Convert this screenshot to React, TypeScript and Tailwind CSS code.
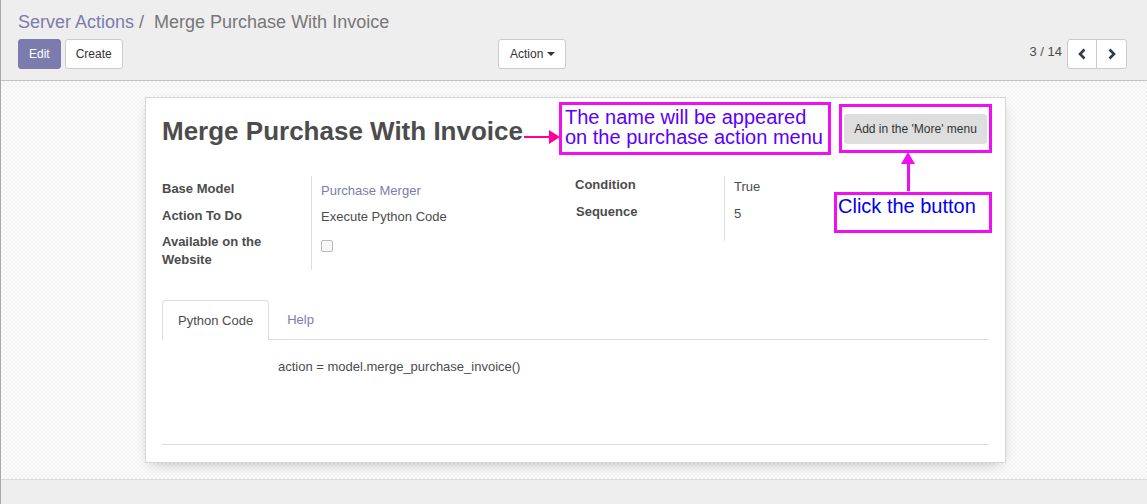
import React from "react";

const Chevron = ({ dir }: { dir: "left" | "right" }) => (
  <svg width="10" height="12" viewBox="0 0 10 12" className="block">
    {dir === "left" ? (
      <path d="M7.5 1.5 L3 6 L7.5 10.5" fill="none" stroke="#2f3a4a" strokeWidth="2.6" strokeLinejoin="miter" />
    ) : (
      <path d="M2.5 1.5 L7 6 L2.5 10.5" fill="none" stroke="#2f3a4a" strokeWidth="2.6" strokeLinejoin="miter" />
    )}
  </svg>
);

export default function App() {
  return (
    <div className="w-[1147px] h-[504px] flex flex-col border-l border-[#a9a9a9] font-['Liberation_Sans',Arial,sans-serif] text-[13px] text-[#4c4c4c] overflow-hidden">
      {/* Control panel */}
      <div className="h-[81px] shrink-0 bg-[#efeeef] border-b border-[#c4c4c4] pl-[17px] pr-[20px]">
        <div className="pt-[11px] h-[39px] text-[18px] leading-[22px]">
          <span className="text-[#7c7bad]">Server Actions</span>
          <span className="text-[#777]"> /&nbsp; Merge Purchase With Invoice</span>
        </div>
        <div className="flex items-start h-[30px]">
          <div className="w-[480px] flex gap-[4px]">
            <button className="h-[30px] px-[10px] rounded-[3px] bg-[#7c7bad] text-white text-[12px] border border-[#7c7bad]">
              Edit
            </button>
            <button className="h-[30px] px-[10px] rounded-[3px] bg-white text-[#333] text-[12px] border border-[#ccc]">
              Create
            </button>
          </div>
          <div className="flex-1">
            <button className="h-[30px] pl-[11px] pr-[10px] rounded-[3px] bg-white text-[#333] text-[12px] border border-[#ccc] flex items-center gap-[4px]">
              Action
              <span className="inline-block w-0 h-0 border-l-[4px] border-r-[4px] border-t-[4px] border-l-transparent border-r-transparent border-t-[#333]" />
            </button>
          </div>
          <div className="flex items-start gap-[5px]">
            <span className="text-[13px] text-[#4c4c4c] leading-[26px]">3 / 14</span>
            <div className="flex h-[30px] border border-[#ccc] rounded-[3px] bg-white">
              <button className="w-[29px] flex items-center justify-center border-r border-[#ccc]">
                <Chevron dir="left" />
              </button>
              <button className="w-[29px] flex items-center justify-center">
                <Chevron dir="right" />
              </button>
            </div>
          </div>
        </div>
      </div>

      {/* Content */}
      <div className="flex-1 bg-[image:repeating-conic-gradient(#f1f1f1_0%_25%,#ffffff_0%_50%)] bg-[length:4px_4px] pt-[16px]">
        <div className="relative ml-[144px] w-[861px] h-[366px] bg-white border border-[#d6d6d6] shadow-[0_5px_14px_-6px_rgba(0,0,0,0.3)] px-[16px]">
          {/* Title row */}
          <div className="flex items-start justify-between">
            <h1 className="pt-[17px] text-[26px] leading-[32px] font-bold text-[#4c4c4c]">
              Merge Purchase With Invoice
            </h1>
            <div className="mt-[6px] mr-[-3px] border-[3px] border-[#f00ff0] w-[153px] h-[49px] px-[2px] pt-[7px]">
              <button className="w-full h-[30px] bg-[#dedede] rounded-[3px] text-[12px] text-[#333]">
                Add in the 'More' menu
              </button>
            </div>
          </div>

          {/* Fields */}
          <div className="flex mt-[23px]">
            <div className="w-[413px] flex">
              <div className="w-[150px] border-r border-[#ddd] font-bold pb-[1px]">
                <div className="h-[27px] pt-[1px] leading-[24px]">Base Model</div>
                <div className="h-[27px] pt-[1px] leading-[24px]">Action To Do</div>
                <div className="leading-[18px] pt-[3px]">
                  Available on the
                  <br />
                  Website
                </div>
              </div>
              <div className="pl-[9px]">
                <div className="h-[27px] pt-[3px] leading-[24px] text-[#7c7bad]">Purchase Merger</div>
                <div className="h-[27px] pt-[2px] leading-[24px]">Execute Python Code</div>
                <div className="pt-[10px]">
                  <span className="block w-[12px] h-[12px] border border-[#bbb] rounded-[2px] bg-[#f7f7f7]" />
                </div>
              </div>
            </div>
            <div className="w-[413px] flex">
              <div className="w-[150px] border-r border-[#ddd] font-bold h-[65px]">
                <div className="h-[27px] pt-[1px] leading-[16px]">Condition</div>
                <div className="h-[27px] pl-[1px] pt-[1px] leading-[16px]">Sequence</div>
              </div>
              <div className="pl-[9px]">
                <div className="h-[27px] pt-[3px] leading-[16px]">True</div>
                <div className="h-[27px] pt-[3px] leading-[16px]">5</div>
              </div>
            </div>
          </div>

          {/* Tabs */}
          <div className="mt-[30px] flex items-end border-b border-[#ddd] h-[40px]">
            <div className="h-[40px] px-[15px] border border-b-0 border-[#ddd] rounded-t-[4px] bg-white flex items-center text-[13px] text-[#4c4c4c] -mb-px">
              Python Code
            </div>
            <div className="h-[40px] px-[18px] pt-[2px] flex items-center text-[13px] text-[#7c7bad]">Help</div>
          </div>
          <div className="h-[105px] border-b border-[#ddd] pl-[116px] pt-[18px] leading-[18px]">
            action = model.merge_purchase_invoice()
          </div>

          {/* Annotations */}
          <div className="absolute left-[378px] top-[32px] flex items-center">
            <div className="w-[25px] h-[2px] bg-[#ff0099]" />
            <div className="w-0 h-0 border-t-[7px] border-b-[7px] border-l-[11px] border-t-transparent border-b-transparent border-l-[#ff0099]" />
          </div>
          <div className="absolute left-[413px] top-[4px] w-[272px] h-[53px] border-[3px] border-[#f00ff0] pl-[3px] text-[20px] leading-[20px] text-[#5a00ff]">
            <div className="pt-[2px]">The name will be appeared</div>
            <div>on the purchase action menu</div>
          </div>
          <div className="absolute left-[755px] top-[54px] flex flex-col items-center">
            <div className="w-0 h-0 border-l-[7px] border-r-[7px] border-b-[12px] border-l-transparent border-r-transparent border-b-[#f00ff0]" />
            <div className="w-[3px] h-[27px] bg-[#f00ff0]" />
          </div>
          <div className="absolute left-[688px] top-[94px] w-[158px] h-[41px] border-[3px] border-[#f00ff0] pl-[1px] text-[20px] leading-[22px] text-[#0000ee]">
            Click the button
          </div>
        </div>
      </div>

      {/* Bottom strip */}
      <div className="h-[25px] shrink-0 bg-[#efeeef] border-t border-[#dcdcdc]" />
    </div>
  );
}
